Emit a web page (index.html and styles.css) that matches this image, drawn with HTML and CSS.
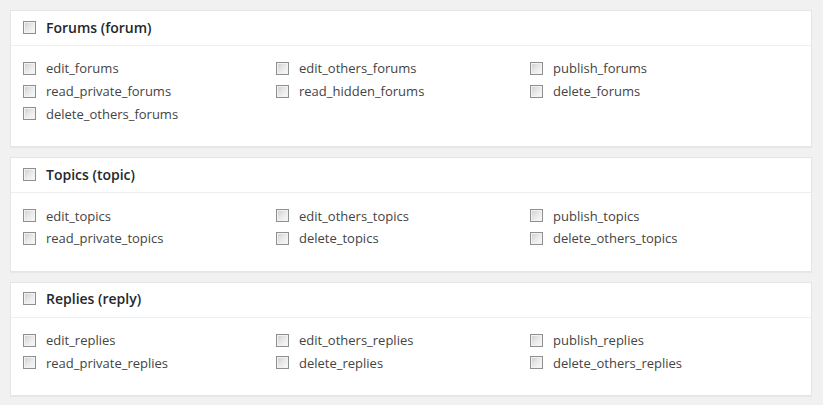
FILE: index.html
```html
<!DOCTYPE html>
<html lang="en">
<head>
    <meta charset="UTF-8">
    <title>Capabilities</title>
    <link rel="stylesheet" href="styles.css">
</head>
<body>
    <!-- Forums -->
    <div class="postbox">
        <h3 class="box-title">
            <label><input type="checkbox"> Forums (forum)</label>
        </h3>
        <div class="cap-list">
            <label><input type="checkbox"> edit_forums</label>
            <label><input type="checkbox"> edit_others_forums</label>
            <label><input type="checkbox"> publish_forums</label>
            <label><input type="checkbox"> read_private_forums</label>
            <label><input type="checkbox"> read_hidden_forums</label>
            <label><input type="checkbox"> delete_forums</label>
            <label><input type="checkbox"> delete_others_forums</label>
        </div>
    </div>

    <!-- Topics -->
    <div class="postbox">
        <h3 class="box-title">
            <label><input type="checkbox"> Topics (topic)</label>
        </h3>
        <div class="cap-list">
            <label><input type="checkbox"> edit_topics</label>
            <label><input type="checkbox"> edit_others_topics</label>
            <label><input type="checkbox"> publish_topics</label>
            <label><input type="checkbox"> read_private_topics</label>
            <label><input type="checkbox"> delete_topics</label>
            <label><input type="checkbox"> delete_others_topics</label>
        </div>
    </div>

    <!-- Replies -->
    <div class="postbox">
        <h3 class="box-title">
            <label><input type="checkbox"> Replies (reply)</label>
        </h3>
        <div class="cap-list">
            <label><input type="checkbox"> edit_replies</label>
            <label><input type="checkbox"> edit_others_replies</label>
            <label><input type="checkbox"> publish_replies</label>
            <label><input type="checkbox"> read_private_replies</label>
            <label><input type="checkbox"> delete_replies</label>
            <label><input type="checkbox"> delete_others_replies</label>
        </div>
    </div>
</body>
</html>
```

FILE: styles.css
```css
body {
    margin: 10px 11px 0 10px;
    background-color: #f1f1f1;
    font-family: "Open Sans", sans-serif;
    font-size: 13px;
    color: #444;
}
.postbox {
    background: #fff;
    border: 1px solid #e5e5e5;
    box-shadow: 0 1px 1px rgba(0, 0, 0, 0.04);
    margin-bottom: 10px;
}
.box-title {
    margin: 0;
    height: 32px;
    padding: 0 12px 2px;
    display: flex;
    align-items: center;
    border-bottom: 1px solid #eee;
    font-size: 14px;
    font-weight: 600;
    color: #23282d;
}
.box-title label,
.cap-list label {
    display: flex;
    align-items: center;
}
.cap-list {
    display: grid;
    grid-template-columns: 253px 254px 1fr;
    grid-auto-rows: 22.75px;
    padding: 11px 12px 21px;
}
input[type="checkbox"] {
    appearance: none;
    -webkit-appearance: none;
    width: 13px;
    height: 13px;
    margin: 0 10px 0 0;
    border: 1px solid #8e8f8f;
    background: linear-gradient(135deg, #cdcdcd 0%, #e9e9e9 50%, #fbfbfb 100%);
    box-shadow: inset 0 0 0 1px #f2f2f2;
    flex-shrink: 0;
}
```
